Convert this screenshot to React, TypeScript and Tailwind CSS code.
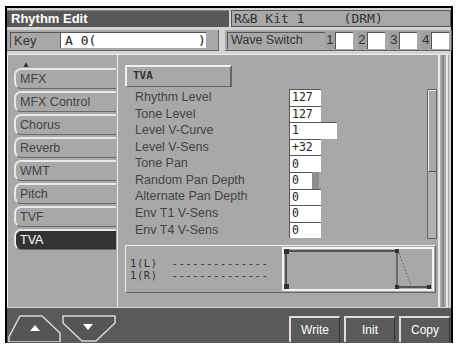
import React from 'react';

const sans = 'font-["Liberation_Sans",sans-serif]';
const mono = 'font-["DejaVu_Sans_Mono",monospace]';

const tabs = ['MFX', 'MFX Control', 'Chorus', 'Reverb', 'WMT', 'Pitch', 'TVF', 'TVA'];

const params = [
  { label: 'Rhythm Level', value: '127', w: 'w-[32px]' },
  { label: 'Tone Level', value: '127', w: 'w-[32px]' },
  { label: 'Level V-Curve', value: '1', w: 'w-[48px]' },
  { label: 'Level V-Sens', value: '+32', w: 'w-[32px]' },
  { label: 'Tone Pan', value: '0', w: 'w-[32px]' },
  { label: 'Random Pan Depth', value: '0', w: 'w-[23px]', extra: true },
  { label: 'Alternate Pan Depth', value: '0', w: 'w-[32px]' },
  { label: 'Env T1 V-Sens', value: '0', w: 'w-[32px]' },
  { label: 'Env T4 V-Sens', value: '0', w: 'w-[32px]' },
];

function WaveBox({ n }: { n: string }) {
  return (
    <div className="flex h-[17px] items-stretch">
      <div className={`flex w-[10px] items-center justify-center bg-[#a0a0a0] text-[13px] text-[#333] ${sans}`}>{n}</div>
      <div className="w-[18px] border-l border-t border-[#555] bg-white" />
    </div>
  );
}

function Envelope() {
  return (
    <svg width="152" height="44" viewBox="0 0 152 44">
      <rect x="1" y="1" width="150" height="42" fill="none" stroke="#f4f4f4" strokeWidth="2" />
      <polyline points="4,40 4,4 115,4" fill="none" stroke="#555" strokeWidth="2" />
      <line x1="115" y1="4" x2="115" y2="40" stroke="#555" strokeWidth="1.5" />
      <line x1="115" y1="40" x2="147" y2="40" stroke="#555" strokeWidth="2" />
      <line x1="117" y1="6" x2="129" y2="38" stroke="#555" strokeWidth="1" strokeDasharray="1.5 2" />
      <rect x="2" y="2" width="5" height="5" fill="#333" />
      <rect x="2" y="37" width="5" height="5" fill="#333" />
      <rect x="113" y="2" width="4" height="4" fill="#333" />
      <rect x="113" y="38" width="4" height="4" fill="#333" />
      <rect x="145" y="38" width="4" height="4" fill="#333" />
    </svg>
  );
}

function ArrowButton({ up }: { up: boolean }) {
  return up ? (
    <svg width="54" height="27" viewBox="0 0 54 27">
      <polygon points="1,27 1,22 12,1 34,1 52,18 52,27" fill="#555" stroke="#d8d8d8" strokeWidth="1.5" />
      <polygon points="22,16 27,10 32,16" fill="#fff" />
    </svg>
  ) : (
    <svg width="56" height="27" viewBox="0 0 56 27">
      <polygon points="1,1 53,1 53,8 34,26 20,26 1,8" fill="#555" stroke="#d8d8d8" strokeWidth="1.5" />
      <polygon points="21,9 31,9 26,15" fill="#fff" />
    </svg>
  );
}

function BarButton({ label }: { label: string }) {
  return (
    <div className={`flex h-[26px] w-[51px] items-center justify-center border-l-2 border-t-2 border-[#dcdcdc] border-r border-r-[#333] bg-[#5a5a5a] text-[12px] text-white ${sans}`}>
      {label}
    </div>
  );
}

export default function App() {
  return (
    <div className="h-[348px] w-[456px] bg-white pl-[5px] pt-[6px]">
      <div className="flex h-[337px] w-[448px] flex-col border-l-2 border-r-2 border-t-2 border-black bg-[#d4d4d4]">
        {/* title row */}
        <div className="mt-[2px] flex h-[17px]">
          <div className={`flex w-[222px] items-center border-t border-[#888] bg-[#585858] pl-[4px] text-[13px] font-bold text-white ${sans}`}>
            Rhythm Edit
          </div>
          <div className={`ml-[2px] flex flex-1 items-center border border-[#555] bg-[#a8a8a8] pl-[2px] text-[13px] whitespace-pre text-[#333] ${mono}`}>
            {'R&B Kit 1     (DRM)'}
          </div>
        </div>

        {/* key / wave switch row */}
        <div className="mt-[3px] flex h-[21px]">
          <div className="flex w-[218px] items-stretch border-b border-r border-[#666] bg-[#a8a8a8] py-[2px] pl-[3px] pr-[12px]">
            <div className={`flex w-[50px] items-center border-l border-t border-[#555] pl-[3px] text-[13px] text-[#333] ${sans}`}>Key</div>
            <div className={`flex flex-1 items-center border-l border-t border-[#555] bg-white pl-[4px] text-[13px] whitespace-pre text-[#222] ${mono}`}>
              {'A 0(             )'}
            </div>
          </div>
          <div className="ml-[6px] flex flex-1 items-center border-b border-r border-[#666] bg-[#a8a8a8] px-[2px]">
            <div className={`flex h-[17px] w-[98px] items-center border-l border-t border-[#555] pl-[3px] text-[12.5px] text-[#333] ${sans}`}>
              Wave Switch
            </div>
            <div className="flex gap-[4px]">
              <WaveBox n="1" />
              <WaveBox n="2" />
              <WaveBox n="3" />
              <WaveBox n="4" />
            </div>
          </div>
        </div>

        {/* main area */}
        <div className="mt-[3px] flex h-[253px]">
          {/* tab column */}
          <div className="w-[110px] border-l border-t border-[#eee] bg-[#a8a8a8] pl-[6px] pr-[1px]">
            <div className="flex h-[13px] items-end pl-[8px] text-[8px] leading-none text-[#333]">▲</div>
            <div className="flex flex-col gap-[2px]">
              {tabs.map((t) => (
                <div
                  key={t}
                  className={`flex h-[21px] items-center rounded-l-[7px] border-l-2 border-t-2 border-b border-[#e8e8e8] border-b-[#6a6a6a] pl-[4px] text-[12.5px] ${sans} ${
                    t === 'TVA' ? 'bg-[#333] text-white' : 'bg-[#a8a8a8] text-[#444]'
                  }`}
                >
                  {t}
                </div>
              ))}
            </div>
          </div>

          {/* main panel */}
          <div className="flex w-[332px] border-l border-t border-[#eee] bg-[#a8a8a8]">
            <div className="flex w-[320px] flex-col pl-[7px]">
              <div className={`mt-[10px] flex h-[22px] w-[107px] items-center border-l-2 border-t-2 border-[#efefef] border-r-2 border-b border-r-[#666] border-b-[#666] pl-[6px] text-[11px] font-bold text-[#333] ${mono}`}>
                TVA
              </div>
              <div className="mt-[2px] flex">
                <div className="flex w-[302px] flex-col">
                  {params.map((p) => (
                    <div key={p.label} className="flex h-[16.6px] items-stretch">
                      <div className={`flex w-[164px] items-center pl-[10px] text-[12.5px] text-[#444] ${sans}`}>{p.label}</div>
                      <div className={`${p.w} flex items-center border-l border-t border-[#555] bg-white pl-[2px] text-[11.5px] text-[#222] ${mono}`}>
                        {p.value}
                      </div>
                      {p.extra && <div className="w-[7px] bg-[#8e8e8e]" />}
                    </div>
                  ))}
                </div>
                <div className="flex h-[150px] w-[10px] flex-col border border-[#666] bg-[#b0b0b0]">
                  <div className="h-[82px] border-b border-l border-t border-[#eee] border-b-[#555] bg-[#a8a8a8]" />
                </div>
              </div>

              <div className="mt-[6px] flex h-[48px] w-[311px] items-center border-l border-t border-[#eee] border-b border-r border-b-[#666] border-r-[#666] pl-[4px]">
                <div className={`flex w-[152px] flex-col text-[10.5px] leading-[12.5px] tracking-[0.6px] whitespace-pre text-[#333] ${mono}`}>
                  <span>{'1(L)  --------------'}</span>
                  <span>{'1(R)  --------------'}</span>
                </div>
                <Envelope />
              </div>
            </div>
            <div className="flex w-[12px] gap-[2px] pl-[1px]">
              <div className="w-[2px] bg-[#e8e8e8]" />
              <div className="w-[2px] bg-[#888]" />
              <div className="w-[2px] bg-[#e8e8e8]" />
            </div>
          </div>
        </div>

        {/* bottom bar */}
        <div className="mt-[1px] flex h-[35px] items-end bg-[#5a5a5a] pb-[1px]">
          <div className="flex items-end pl-[1px]">
            <ArrowButton up />
            <ArrowButton up={false} />
          </div>
          <div className="ml-auto flex gap-[4px] pr-[1px]">
            <BarButton label="Write" />
            <BarButton label="Init" />
            <BarButton label="Copy" />
          </div>
        </div>
      </div>
    </div>
  );
}
